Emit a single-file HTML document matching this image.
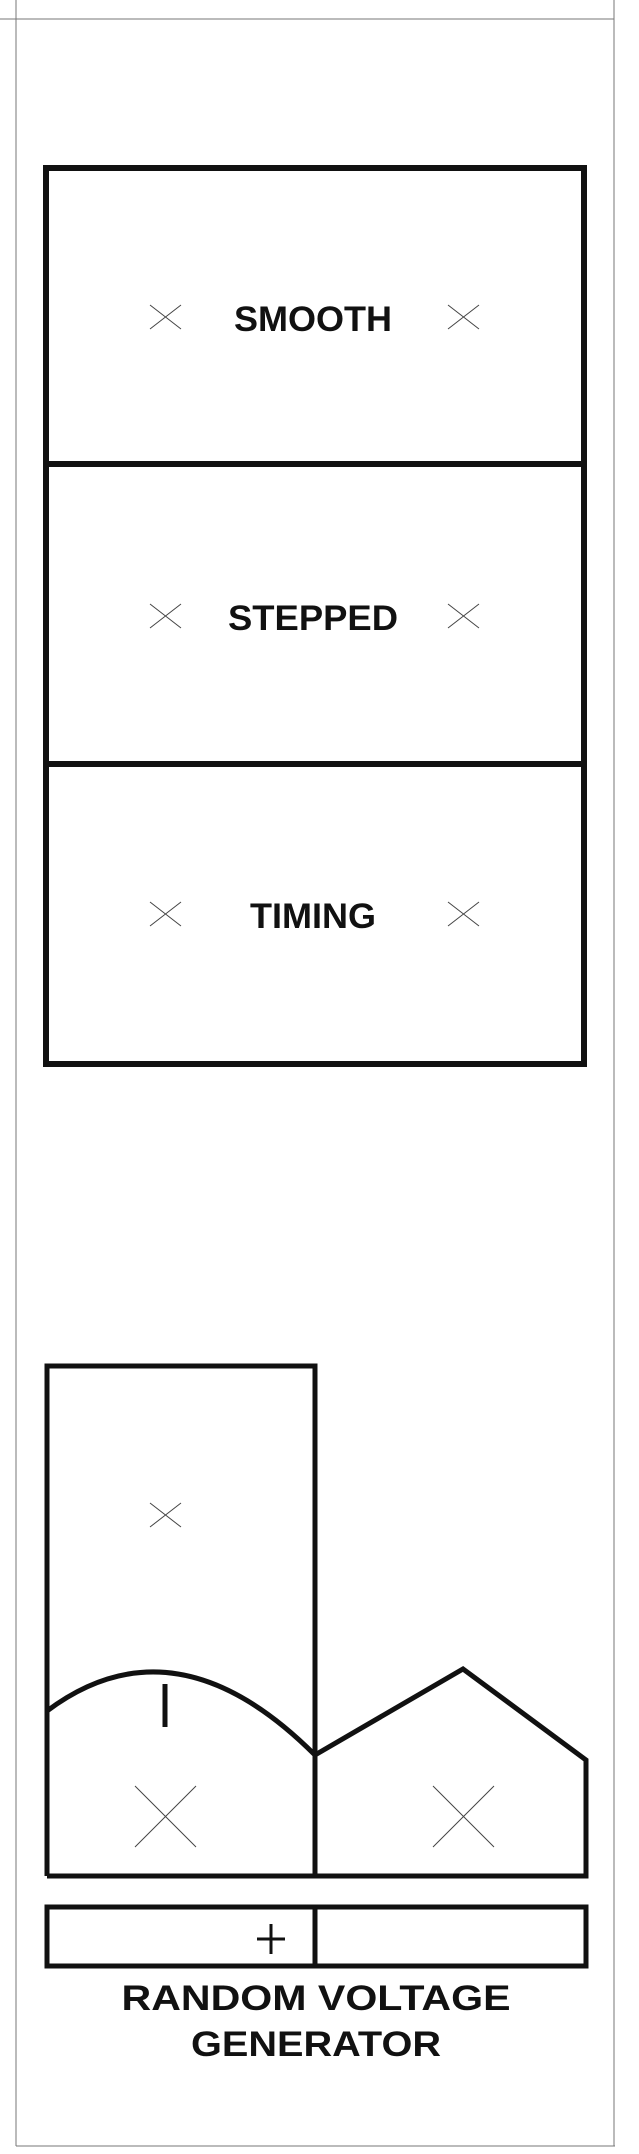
<!DOCTYPE html>
<html><head><style>
html,body{margin:0;padding:0;background:#fff;}
body{width:639px;height:2154px;position:relative;overflow:hidden;}
svg{position:absolute;left:0;top:0;}
text{font-family:"Liberation Sans",Arial,sans-serif;font-weight:bold;fill:#111;}
</style></head><body>
<svg width="639" height="2154" viewBox="0 0 639 2154">
<g stroke="#777" stroke-width="1" fill="none">
<line x1="16" y1="0" x2="16" y2="2146"/>
<line x1="614" y1="0" x2="614" y2="2146"/>
<line x1="0" y1="19" x2="614" y2="19"/>
<line x1="16" y1="2146" x2="615" y2="2146"/>
</g>
<g stroke="#111" stroke-width="6" fill="none">
<rect x="46" y="168" width="538" height="896"/>
<line x1="46" y1="464" x2="584" y2="464"/>
<line x1="46" y1="764" x2="584" y2="764"/>
</g>
<g stroke="#444" stroke-width="1" fill="none">
<path d="M150 305L181 329M150 329L181 305"/>
<path d="M448 305L479 329M448 329L479 305"/>
<path d="M150 604L181 628M150 628L181 604"/>
<path d="M448 604L479 628M448 628L479 604"/>
<path d="M150 902L181 926M150 926L181 902"/>
<path d="M448 902L479 926M448 926L479 902"/>
</g>
<text x="313" y="331" font-size="35" text-anchor="middle" textLength="158" lengthAdjust="spacingAndGlyphs">SMOOTH</text>
<text x="313" y="630" font-size="35" text-anchor="middle" textLength="170" lengthAdjust="spacingAndGlyphs">STEPPED</text>
<text x="313" y="928" font-size="35" text-anchor="middle" textLength="126" lengthAdjust="spacingAndGlyphs">TIMING</text>
<g stroke="#111" stroke-width="5" fill="none">
<path d="M47 1876V1366H315V1876"/>
<path d="M47 1711Q175 1615 315 1755"/>
<path d="M315 1755L463 1669L586 1760V1876H47"/>
<line x1="165" y1="1684" x2="165" y2="1727"/>
<rect x="47" y="1907" width="539" height="59"/>
<line x1="315" y1="1907" x2="315" y2="1966"/>
</g>
<g stroke="#444" stroke-width="1" fill="none">
<path d="M150 1503L181 1527M150 1527L181 1503"/>
<path d="M135 1786L196 1847M135 1847L196 1786"/>
<path d="M433 1786L494 1847M433 1847L494 1786"/>
</g>
<g stroke="#111" stroke-width="3"><line x1="271" y1="1924" x2="271" y2="1954"/><line x1="257" y1="1939" x2="285" y2="1939"/></g>
<text x="316" y="2010" font-size="35" text-anchor="middle" textLength="389" lengthAdjust="spacingAndGlyphs">RANDOM  VOLTAGE</text>
<text x="316" y="2056" font-size="35" text-anchor="middle" textLength="250" lengthAdjust="spacingAndGlyphs">GENERATOR</text>
</svg>
</body></html>
